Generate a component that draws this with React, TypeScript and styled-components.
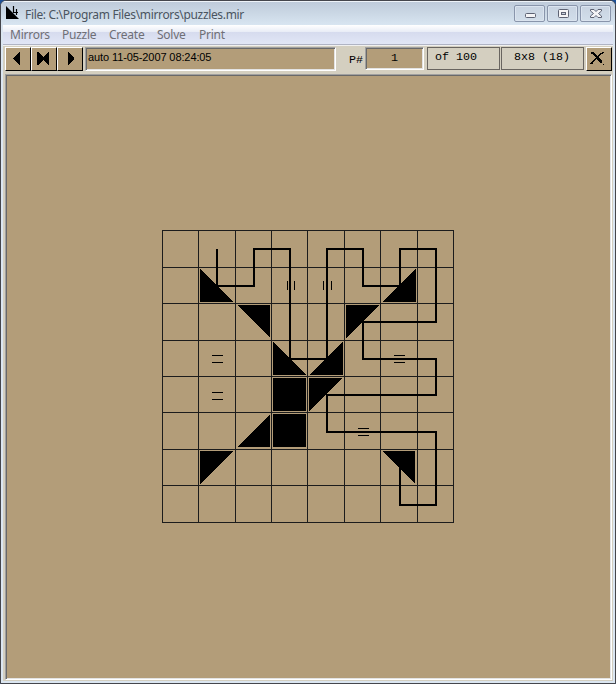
import React from "react";
import styled, { createGlobalStyle } from "styled-components";

const TAN = "#b39d79";
const FACE = "#d4cfc0";

const Global = createGlobalStyle`
  *{box-sizing:border-box}
  html,body{margin:0;padding:0;background:#1d4f96;overflow:hidden}
`;

const Window = styled.div`
  width: 616px;
  height: 684px;
  display: flex;
  flex-direction: column;
  border: 1px solid #45464c;
  border-radius: 6px 6px 0 0;
  background: #dbe6f1;
  overflow: hidden;
  font-family: "Noto Sans", sans-serif;
`;

const TitleBar = styled.header`
  height: 24px;
  flex: none;
  display: flex;
  align-items: flex-start;
  padding-left: 4px;
  border-top: 1px solid #eef3f8;
  background: linear-gradient(#bfcbda, #cbd8e5 50%, #d8e5f1);
`;

const Title = styled.h1`
  margin: 4px 0 0 4px;
  width: 485px;
  font: 400 12px/17px "Noto Sans", sans-serif;
  letter-spacing: -0.34px;
  color: #4a545f;
  white-space: pre;
`;

const Logo = styled.svg`
  margin-top: 3px;
  flex: none;
`;

const Captions = styled.div`
  display: flex;
  gap: 2px;
  margin: 3px 0 0 4px;
`;

const CaptionButton = styled.button`
  width: 31px;
  height: 17px;
  padding: 0;
  border: 1px solid #8995ab;
  border-radius: 2px;
  box-shadow: inset 0 0 0 1px #dbe4ef;
  background: linear-gradient(#c8d3e1, #d2deea);
  svg { display: block; }
`;

const Body = styled.div`
  flex: 1;
  margin: 0 2px 2px 2px;
  display: flex;
  flex-direction: column;
  background: ${FACE};
`;

const Menu = styled.nav`
  height: 20px;
  flex: none;
  display: flex;
  gap: 14px;
  padding-left: 7px;
  border-bottom: 1px solid #b0b4c4;
  box-shadow: 0 1px 0 #f0f0f0;
  background: linear-gradient(#fff 0, #e8ecf6 7px, #d6dbee 7px, #e1e6f6 19px);
`;

const MenuItem = styled.span<{ $w: number }>`
  width: ${(p) => p.$w}px;
  font: 12px/20px "Noto Sans", sans-serif;
  letter-spacing: -0.25px;
  color: #6f6f76;
  white-space: pre;
`;

const Toolbar = styled.div`
  height: 29px;
  flex: none;
  display: flex;
  align-items: flex-start;
  padding: 2px 0 0 2px;
`;

const ToolButton = styled.button`
  width: 26px;
  height: 24px;
  flex: none;
  padding: 0;
  border: 1px solid;
  border-color: #fff #000 #000 #fff;
  background: ${TAN};
  svg { display: block; }
`;

const Field = styled.div<{ $w: number; $h: number }>`
  width: ${(p) => p.$w}px;
  height: ${(p) => p.$h}px;
  flex: none;
  border: 1px solid;
  border-color: #a0a0a0 #fff #fff #a0a0a0;
  box-shadow: inset 1px 1px 0 #696969, inset -1px -1px 0 #e3e3e3;
  background: ${TAN};
  color: #000;
`;

const NameField = styled(Field)`
  margin-left: 2px;
  padding-left: 2px;
  font: 11px/19px "Liberation Sans", sans-serif;
  letter-spacing: -0.1px;
`;

const NumberField = styled(Field)`
  font: 11.67px/21px "Liberation Mono", monospace;
  text-align: center;
`;

const Label = styled.span`
  width: 29px;
  padding: 3px 0 0 13px;
  font: 11.67px/20px "Liberation Mono", monospace;
  color: #000;
`;

const Status = styled.div<{ $w: number; $pad: number; $gap: number }>`
  width: ${(p) => p.$w}px;
  height: 23px;
  margin-left: ${(p) => p.$gap}px;
  padding-left: ${(p) => p.$pad}px;
  flex: none;
  border: 1px solid #696560;
  font: 11.67px/18px "Liberation Mono", monospace;
  white-space: pre;
  color: #000;
`;

const CloseTool = styled(ToolButton)`
  margin-left: 2px;
`;

const Canvas = styled.main`
  flex: 1;
  margin: 0 1px 1px 2px;
  border: 1px solid;
  border-color: #a0a0a0 #fff #fff #a0a0a0;
  box-shadow: inset 1px 1px 0 #696969, inset -1px -1px 0 #e3e3e3;
  background: ${TAN};
  padding: 155px 0 0 156px;
  svg { display: block; }
`;

const XS = [162, 198, 235, 271, 307, 344, 380, 417, 453];
const YS = [230, 267, 303, 340, 376, 412, 449, 485, 522];

// Corner of the cell that the mirror fills: bl, br, tl, tr; "sq" fills the block.
type Kind = "bl" | "br" | "tl" | "tr" | "sq";
const MIRRORS: [number, number, Kind, number][] = [
  [200, 269, "bl", 33], [382, 269, "br", 34], [237, 305, "tr", 33],
  [346, 305, "tl", 33], [273, 342, "bl", 33], [309, 342, "br", 34],
  [273, 378, "sq", 33], [309, 378, "tl", 33], [237, 414, "br", 33],
  [273, 414, "sq", 33], [200, 451, "tl", 33], [382, 451, "tr", 33],
];

const shape = (x: number, y: number, k: Kind, w: number) => {
  const r = x + w, b = y + 33;
  const p: Record<Kind, string> = {
    bl: `${x},${y} ${r},${b} ${x},${b}`,
    br: `${r},${y} ${r},${b} ${x},${b}`,
    tl: `${x},${y} ${r},${y} ${x},${b}`,
    tr: `${x},${y} ${r},${y} ${r},${b}`,
    sq: `${x},${y} ${r},${y} ${r},${b} ${x},${b}`,
  };
  return p[k];
};

const Puzzle = () => (
  <svg width="292" height="293" viewBox="162 230 292 293" shapeRendering="crispEdges">
    <g fill="#1c1c1c">
      {XS.map((x) => <rect key={x} x={x} y="230" width="1" height="293" />)}
      {YS.map((y) => <rect key={y} x="162" y={y} width="292" height="1" />)}
    </g>
    {MIRRORS.map(([x, y, k, w]) => <polygon key={`${x}-${y}`} points={shape(x, y, k, w)} />)}
    <path
      fill="none" stroke="#000" strokeWidth="2"
      d="M217 249V286H254V249H290V359H327V249H363V286H400V249H436V322H363V359H436V395H327V432H436V505H400V468"
    />
    <path
      fill="none" stroke="#000"
      d="M287.5 281v9M294.5 281v9M323.5 281v9M331.5 281v9M212 355.5h11M212 362.5h11M394 355.5h11M394 362.5h11M212 392.5h11M212 399.5h11M358 428.5h11M358 435.5h11"
    />
  </svg>
);

const TOOLS = ["M15 5V18H14L8 12V11L14 5Z", "M6 5H7L12 10L17 5H18V18H17L12 13L7 18H6Z", "M11 5V18H12L17 12V11L12 5Z"];
const MENUS: [string, number][] = [["Mirrors", 38], ["Puzzle", 33], ["Create", 34], ["Solve", 28], ["Print", 30]];

export default function App() {
  return (
    <>
      <Global />
      <Window>
        <TitleBar>
          <Logo width="16" height="16" viewBox="0 0 16 16">
            <path d="M1 1L14 14H1Z" />
            <path d="M8.5 1V7.5H13M11.5 4V10" fill="none" stroke="#000" strokeWidth="1.2" />
          </Logo>
          <Title>File: C:\Program Files\mirrors\puzzles.mir</Title>
          <Captions>
            <CaptionButton aria-label="Minimize">
              <svg width="29" height="15"><rect x="10.5" y="7.5" width="10" height="4" rx="1" fill="#f4f4f6" stroke="#5d6273" /></svg>
            </CaptionButton>
            <CaptionButton aria-label="Maximize">
              <svg width="29" height="15"><rect x="10.5" y="3.5" width="10" height="8" rx="1" fill="#f4f4f6" stroke="#5d6273" /><rect x="13.5" y="6.5" width="4" height="2" fill="#c8d0dc" stroke="#5d6273" /></svg>
            </CaptionButton>
            <CaptionButton aria-label="Close">
              <svg width="29" height="15"><path d="M9.5 3.5H13L15 5.5L17 3.5H20.5V5L17.5 7.5L20.5 10V11.5H17L15 9.5L13 11.5H9.5V10L12.5 7.5L9.5 5Z" fill="#f4f4f6" stroke="#5d6273" /></svg>
            </CaptionButton>
          </Captions>
        </TitleBar>
        <Body>
          <Menu>{MENUS.map(([m, w]) => <MenuItem key={m} $w={w}>{m}</MenuItem>)}</Menu>
          <Toolbar>
            {TOOLS.map((d) => (
              <ToolButton key={d}><svg width="24" height="22" viewBox="1 1 24 22" shapeRendering="crispEdges"><path d={d} /></svg></ToolButton>
            ))}
            <NameField $w={251} $h={24}>auto 11-05-2007 08:24:05</NameField>
            <Label>P#</Label>
            <NumberField $w={59} $h={23}>1</NumberField>
            <Status $w={73} $pad={7} $gap={3}>of 100</Status>
            <Status $w={83} $pad={12} $gap={1}>8x8 (18)</Status>
            <CloseTool>
              <svg width="24" height="22" shapeRendering="crispEdges">
                <path d="M4 4H7L15 13V15H13L6 6H4Z" />
                <path d="M16.5 4L12 7.5L4 16" fill="none" stroke="#000" strokeWidth="1.5" />
                <path d="M4 14h2v2h-2zM16 16h1v1h-1z" />
              </svg>
            </CloseTool>
          </Toolbar>
          <Canvas><Puzzle /></Canvas>
        </Body>
      </Window>
    </>
  );
}
